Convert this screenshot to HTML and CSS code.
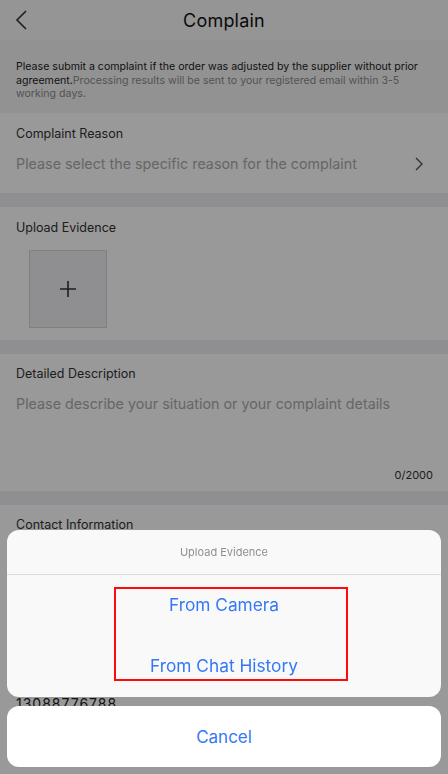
FILE: index.html
```html
<!DOCTYPE html>
<html>
<head>
<meta charset="utf-8">
<link rel="stylesheet" href="styles.css">
</head>
<body>
<div class="page">
  <header class="nav">
    <svg class="back" width="14" height="22" viewBox="0 0 14 22"><path d="M11 2 L2 11 L11 20" fill="none" stroke="#333" stroke-width="1.6"/></svg>
    <h1 class="title">Complain</h1>
  </header>
  <div class="notice">
    <span class="notice-strong">Please submit a complaint if the order was adjusted by the supplier without prior agreement.</span><span class="notice-light">Processing results will be sent to your registered email within 3-5 working days.</span>
  </div>
  <section class="card reason">
    <div class="label">Complaint Reason</div>
    <div class="select-row">
      <span class="placeholder">Please select the specific reason for the complaint</span>
      <svg class="chev" width="10" height="16" viewBox="0 0 10 16"><path d="M2 2 L8 8 L2 14" fill="none" stroke="#555" stroke-width="1.4"/></svg>
    </div>
  </section>
  <section class="card upload">
    <div class="label">Upload Evidence</div>
    <div class="add-box">
      <svg width="18" height="18" viewBox="0 0 18 18"><path d="M9 1 V17 M1 9 H17" stroke="#333" stroke-width="1.6"/></svg>
    </div>
  </section>
  <section class="card desc">
    <div class="label">Detailed Description</div>
    <div class="placeholder desc-ph">Please describe your situation or your complaint details</div>
    <div class="counter">0/2000</div>
  </section>
  <section class="card contact">
    <div class="label">Contact Information</div>
    <div class="phone">13088776788</div>
  </section>
</div>

<div class="mask"></div>

<div class="sheet">
  <div class="sheet-group">
    <div class="sheet-title">Upload Evidence</div>
    <div class="sheet-options">
      <div class="option opt-camera">From Camera</div>
      <div class="option opt-chat">From Chat History</div>
      <div class="highlight"></div>
    </div>
  </div>
  <div class="sheet-cancel">Cancel</div>
</div>
</body>
</html>
```

FILE: styles.css
```css
* { box-sizing: border-box; margin: 0; padding: 0; }
html, body { width: 448px; height: 774px; overflow: hidden; }
body {
  font-family: Inter, "Liberation Sans", Arial, sans-serif;
  background: #efeff4;
  color: #333;
}
.page { display: flex; flex-direction: column; height: 774px; overflow: hidden; }
.nav {
  height: 40px;
  flex: none;
  background: #f8f8f9;
  display: flex;
  align-items: center;
  justify-content: center;
  position: relative;
}
.back { position: absolute; left: 15px; top: 9px; }
.title { font-size: 18px; font-weight: 400; color: #111; letter-spacing: 0.2px; }
.notice {
  flex: none;
  background: #f4f4f6;
  padding: 20px 16px 13px;
  font-size: 10.6px;
  line-height: 13.5px;
  height: 73px;
}
.notice-strong { color: #222; }
.notice-light { color: #8a8a8a; }
.card { flex: none; background: #fff; padding: 0 16px; margin-bottom: 14px; }
.label { font-size: 12.5px; color: #333; line-height: 16px; }
.placeholder { font-size: 14.3px; color: #ababab; line-height: 18px; }
.reason { height: 80px; padding-top: 13px; }
.select-row { display: flex; justify-content: space-between; align-items: center; margin-top: 13px; }
.chev { margin-right: 8px; }
.upload { height: 133px; padding-top: 13px; }
.add-box {
  margin: 14px 0 0 13px;
  width: 78px; height: 78px;
  background: #efeff2;
  border: 1px solid #d6d6da;
  display: flex; align-items: center; justify-content: center;
}
.desc { height: 137px; padding-top: 12px; display: flex; flex-direction: column; }
.desc-ph { margin-top: 13px; }
.counter { margin-top: auto; margin-bottom: 9px; text-align: right; font-size: 11px; color: #333; margin-right: -1px; }
.contact { padding-top: 12px; flex: 1; margin-bottom: 0; }
.phone { margin-top: 162px; font-size: 14px; color: #222; letter-spacing: 1px; }

.mask { position: fixed; inset: 0; background: rgba(0,0,0,0.4); }

.sheet {
  position: fixed;
  left: 7px; right: 7px; bottom: 7px;
  display: flex; flex-direction: column; gap: 9px;
}
.sheet-group { background: #f9f9f9; border-radius: 12px; overflow: hidden; }
.sheet-title {
  height: 45px;
  display: flex; align-items: center; justify-content: center;
  font-size: 11px; color: #8f8f8f;
  border-bottom: 1px solid #dcdcdc;
}
.sheet-options { position: relative; height: 122px; }
.option {
  height: 61px;
  display: flex; align-items: center; justify-content: center;
  font-size: 17.3px; color: #3478f6;
}
.opt-camera { height: 60px; padding-bottom: 2px; }
.highlight {
  position: absolute;
  left: 107px; top: 12px;
  width: 234px; height: 94px;
  border: 2px solid #ff0a0a;
}
.sheet-cancel {
  height: 61px; background: #fff; border-radius: 12px;
  display: flex; align-items: center; justify-content: center;
  font-size: 17px; color: #3478f6;
}
```
